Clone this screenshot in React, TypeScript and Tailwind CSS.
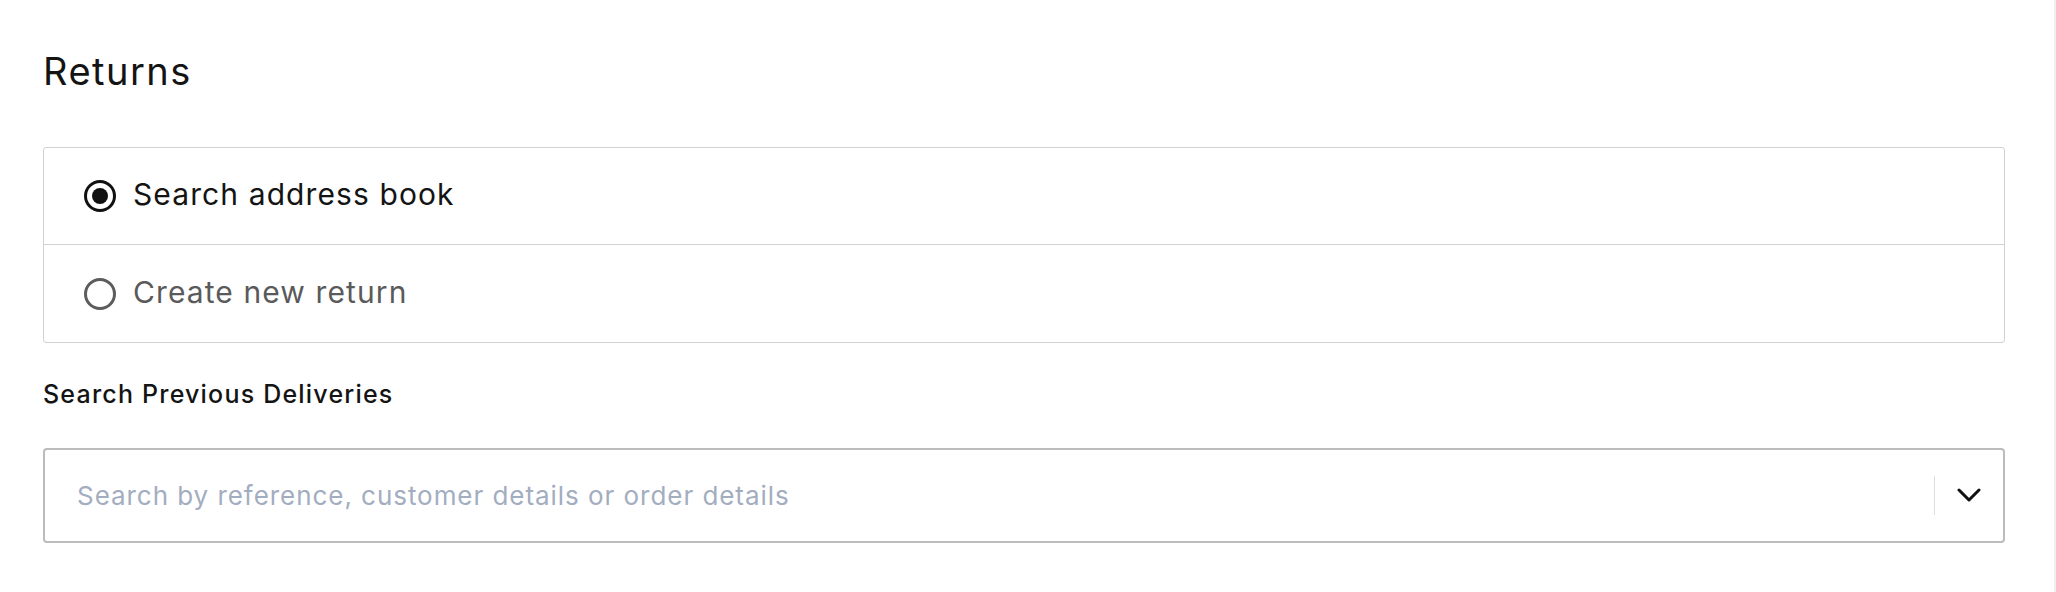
import React from "react";

export default function App() {
  const font = { fontFamily: "Inter, 'Noto Sans', sans-serif" };
  return (
    <div className="flex w-full h-[592px] bg-white" style={font}>
      <div className="flex-1 pl-[43px] pr-[49px]">
        <h1 className="mt-[48px] text-[38px] leading-[46px] font-normal text-[#141414] tracking-[1.5px]">
          Returns
        </h1>
        <div className="mt-[53px] border border-[#d2d2d2] rounded-[3px]">
          <div className="h-[97px] flex items-center pl-[40px] border-b border-[#d2d2d2]">
            <span className="w-[32px] h-[32px] rounded-full border-[3.5px] border-[#111] flex items-center justify-center">
              <span className="w-[16px] h-[16px] rounded-full bg-[#111]" />
            </span>
            <span className="ml-[17px] text-[30px] text-[#141414] leading-[36px] pb-[4px] tracking-[1.1px]">
              Search address book
            </span>
          </div>
          <div className="h-[97px] flex items-center pl-[40px]">
            <span className="w-[32px] h-[32px] rounded-full border-[3px] border-[#5c5c5c]" />
            <span className="ml-[17px] text-[30px] text-[#5a5a5a] leading-[36px] pb-[3px] tracking-[1.1px]">
              Create new return
            </span>
          </div>
        </div>
        <div className="mt-[37px] text-[25px] leading-[29px] font-medium text-[#141414] tracking-[1.2px]">
          Search Previous Deliveries
        </div>
        <div className="mt-[39px] h-[95px] border-2 border-[#bcbcbc] rounded-[4px] flex items-center">
          <div className="flex-1 pl-[32px] text-[26px] leading-[32px] text-[#a3adc0] tracking-[0.95px]">
            Search by reference, customer details or order details
          </div>
          <div className="w-[1px] h-[39px] bg-[#dedede]" />
          <div className="w-[68px] flex items-center justify-center">
            <svg width="24" height="15" viewBox="0 0 24 15" fill="none">
              <polyline points="2,2 12,12 22,2" stroke="#111" strokeWidth="3" strokeLinecap="round" strokeLinejoin="round" fill="none" />
            </svg>
          </div>
        </div>
      </div>
      <div className="w-[2px] h-full bg-[#efefef]" />
    </div>
  );
}
